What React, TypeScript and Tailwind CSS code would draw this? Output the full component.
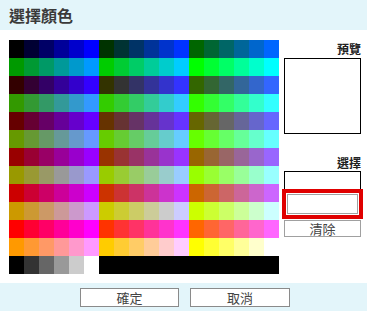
const hex = ["00", "33", "66", "99", "cc", "ff"];

// web-safe palette, 12 rows x 18 columns, same order as the dialog
function buildRows() {
  const rows: string[][] = [];
  for (let r = 0; r < 6; r++) {
    for (let half = 0; half < 2; half++) {
      const row: string[] = [];
      for (let g = half * 3; g < half * 3 + 3; g++) {
        for (let b = 0; b < 6; b++) {
          row.push(`#${hex[r]}${hex[g]}${hex[b]}`);
        }
      }
      rows.push(row);
    }
  }
  return rows;
}

const rows = buildRows();
const grays = ["#000000", "#333333", "#666666", "#999999", "#cccccc", "#ffffff"];

export default function App() {
  return (
    <div
      className="flex h-[311px] w-[367px] flex-col overflow-hidden bg-white text-[#333]"
      style={{ fontFamily: '"Noto Sans CJK TC", "Noto Sans", sans-serif' }}
    >
      <div className="flex h-[30px] items-center bg-[#e3f5fa] px-[9px]">
        <h1 className="text-[16px] font-bold leading-none text-[#3a3a3a]">選擇顏色</h1>
      </div>

      <div className="flex pl-[9px] pt-[10px]">
        <div className="w-[270px]">
          {rows.map((row, i) => (
            <div key={i} className="flex">
              {row.map((color) => (
                <div key={color} className="h-[18px] w-[15px]" style={{ backgroundColor: color }} />
              ))}
            </div>
          ))}
          <div className="flex">
            {grays.map((color) => (
              <div key={color} className="h-[18px] w-[15px]" style={{ backgroundColor: color }} />
            ))}
            <div className="h-[18px] w-[180px] bg-black" />
          </div>
        </div>

        <div className="ml-[5px] flex w-[77px] flex-col">
          <p className="h-[18px] text-right text-[12px] font-bold leading-[18px] text-[#222]">預覽</p>
          <div className="h-[76px] border border-black bg-white" />
          <p className="mt-[20px] h-[17px] text-right text-[12px] font-bold leading-[17px] text-[#222]">選擇</p>
          <div className="h-[18px] border border-b-0 border-black bg-white" />
          <input
            readOnly
            className="mx-[3px] mt-[5px] h-[20px] border border-[#a0a0a0] bg-white outline-4 outline-offset-1 outline-[#e00000] outline-solid"
          />
          <button
            type="button"
            className="mt-[6px] h-[17px] border border-[#a0a0a0] bg-white text-[13px] leading-[15px] text-[#444]"
          >
            清除
          </button>
        </div>
      </div>

      <div className="mt-auto flex h-[28px] items-center justify-center gap-[11px] bg-[#e3f5fa] pl-[3px]">
        <button
          type="button"
          className="h-[19px] w-[99px] border border-[#8a8a8a] bg-white text-[13px] leading-[17px] text-[#444]"
        >
          確定
        </button>
        <button
          type="button"
          className="h-[19px] w-[100px] border border-[#8a8a8a] bg-white text-[13px] leading-[17px] text-[#444]"
        >
          取消
        </button>
      </div>
    </div>
  );
}
